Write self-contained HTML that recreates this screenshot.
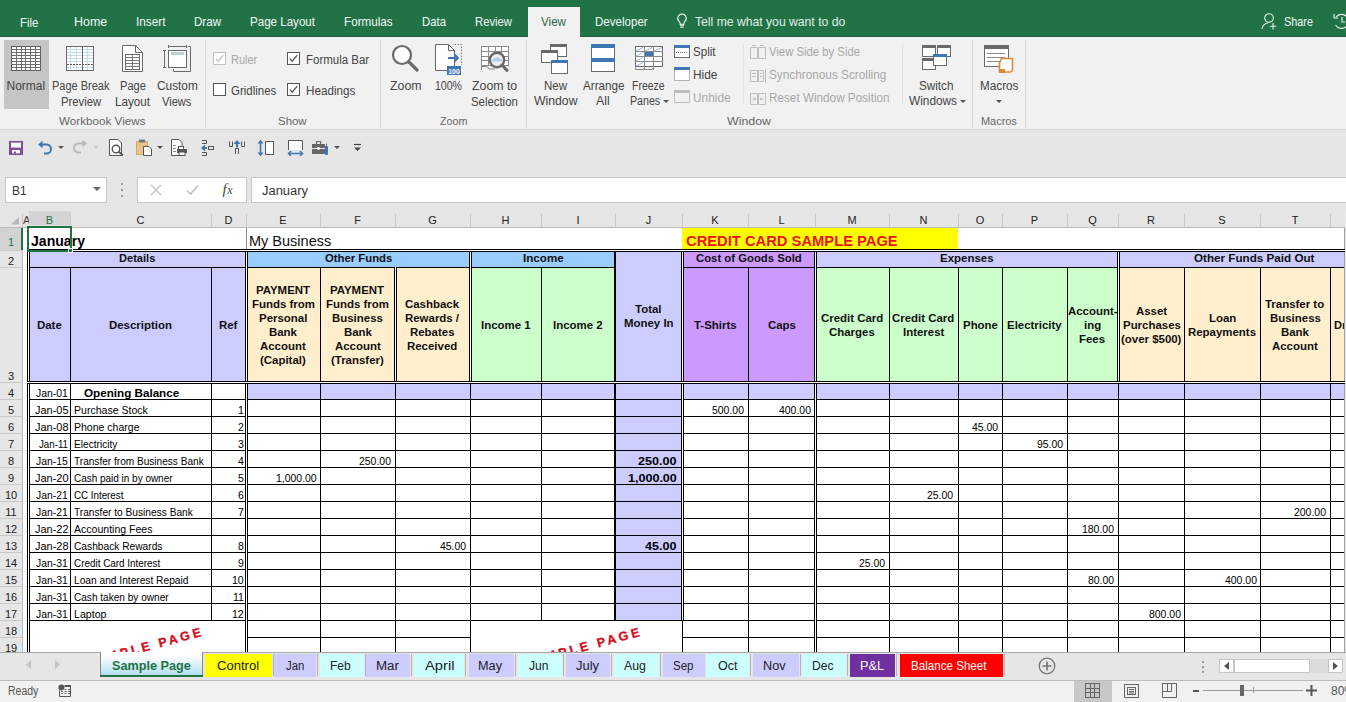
<!DOCTYPE html>
<html><head><meta charset="utf-8"><style>
html,body{margin:0;padding:0;width:1346px;height:702px;overflow:hidden;background:#fff;}
body{position:relative;font-family:"Liberation Sans",sans-serif;}
#r>div,#r div{position:absolute;}
.t{white-space:nowrap;}
</style></head><body><div id="r">
<div style="left:0px;top:0px;width:1346px;height:37px;background:#217346;"></div>
<div style="left:0px;top:36px;width:528px;height:1px;background:#235f40;"></div>
<div style="left:580px;top:36px;width:766px;height:1px;background:#235f40;"></div>
<div style="left:528px;top:7px;width:52px;height:30px;background:#f1f1f1;"></div>
<div class="t" style="left:20.20px;top:15px;font-size:13px;line-height:16px;color:#f3f8f5;transform:scaleX(0.8688);transform-origin:0 0;">File</div>
<div class="t" style="left:74.00px;top:14px;font-size:13px;line-height:16px;color:#f3f8f5;transform:scaleX(0.9602);transform-origin:0 0;">Home</div>
<div class="t" style="left:135.90px;top:14px;font-size:13px;line-height:16px;color:#f3f8f5;transform:scaleX(0.9073);transform-origin:0 0;">Insert</div>
<div class="t" style="left:194.00px;top:14px;font-size:13px;line-height:16px;color:#f3f8f5;transform:scaleX(0.8900);transform-origin:0 0;">Draw</div>
<div class="t" style="left:250.00px;top:14px;font-size:13px;line-height:16px;color:#f3f8f5;transform:scaleX(0.8903);transform-origin:0 0;">Page Layout</div>
<div class="t" style="left:343.90px;top:14px;font-size:13px;line-height:16px;color:#f3f8f5;transform:scaleX(0.8989);transform-origin:0 0;">Formulas</div>
<div class="t" style="left:422.00px;top:14px;font-size:13px;line-height:16px;color:#f3f8f5;transform:scaleX(0.8740);transform-origin:0 0;">Data</div>
<div class="t" style="left:475.00px;top:14px;font-size:13px;line-height:16px;color:#f3f8f5;transform:scaleX(0.8680);transform-origin:0 0;">Review</div>
<div class="t" style="left:595.00px;top:14px;font-size:13px;line-height:16px;color:#f3f8f5;transform:scaleX(0.8893);transform-origin:0 0;">Developer</div>
<div class="t" style="left:541.00px;top:14px;font-size:13px;line-height:16px;color:#2e6b4c;transform:scaleX(0.8946);transform-origin:0 0;">View</div>
<div class="t" style="left:694.60px;top:14px;font-size:13px;line-height:16px;color:#e2efe7;transform:scaleX(0.9363);transform-origin:0 0;">Tell me what you want to do</div>
<svg style="position:absolute;left:676px;top:13px;" width="12" height="16" viewBox="0 0 12 16"><path d="M6 1a4.3 4.3 0 0 0-2.7 7.6c.5.5.8 1 .8 1.7v0.9h3.8v-0.9c0-.7.3-1.2.8-1.7A4.3 4.3 0 0 0 6 1z" fill="none" stroke="#e8f2ec" stroke-width="1.1"/><path d="M4 12h4M4.3 14.2h3.4" stroke="#e8f2ec" stroke-width="1.3"/></svg>
<svg style="position:absolute;left:1261px;top:12px;" width="18" height="18" viewBox="0 0 18 18"><circle cx="8" cy="6" r="4.3" fill="none" stroke="#e8f2ec" stroke-width="1.1"/><path d="M1 17c.6-3.6 3-5.6 6-6" fill="none" stroke="#e8f2ec" stroke-width="1.1"/><path d="M12 11v6.5M8.8 14.2h6.5" stroke="#e8f2ec" stroke-width="1.1"/></svg>
<div class="t" style="left:1284.00px;top:14px;font-size:13px;line-height:16px;color:#f3f8f5;transform:scaleX(0.8359);transform-origin:0 0;">Share</div>
<svg style="position:absolute;left:1333px;top:11px;" width="13" height="20" viewBox="0 0 13 20"><path d="M3 6a7 7 0 1 1 -0.5 8" fill="none" stroke="#e8f2ec" stroke-width="1.1"/><path d="M1 3v4h4" fill="none" stroke="#e8f2ec" stroke-width="1.1"/><path d="M9 6v5h3" fill="none" stroke="#e8f2ec" stroke-width="1.1"/></svg>
<div style="left:0px;top:37px;width:1346px;height:93px;background:#f1f1f1;"></div>
<div style="left:0px;top:129px;width:1346px;height:1px;background:#d5d5d5;"></div>
<div style="left:205px;top:40px;width:1px;height:88px;background:#d8d8d8;"></div>
<div style="left:380px;top:40px;width:1px;height:88px;background:#d8d8d8;"></div>
<div style="left:526px;top:40px;width:1px;height:88px;background:#d8d8d8;"></div>
<div style="left:972px;top:40px;width:1px;height:88px;background:#d8d8d8;"></div>
<div style="left:1025px;top:40px;width:1px;height:88px;background:#d8d8d8;"></div>
<div style="left:743px;top:44px;width:1px;height:60px;background:#e2e2e2;"></div>
<div style="left:902px;top:44px;width:1px;height:60px;background:#e2e2e2;"></div>
<div style="left:4px;top:40px;width:45px;height:69px;background:#c5c5c5;"></div>
<svg style="position:absolute;left:11px;top:46px;" width="30" height="25" viewBox="0 0 30 25"><rect x="0.5" y="0.5" width="29" height="24" fill="#fff" stroke="#5e5e5e"/><path d="M5.5 0V25" stroke="#6e6e6e"/><path d="M10.5 0V25" stroke="#6e6e6e"/><path d="M14.5 0V25" stroke="#6e6e6e"/><path d="M19.5 0V25" stroke="#6e6e6e"/><path d="M24.5 0V25" stroke="#6e6e6e"/><path d="M0 3.5H30" stroke="#6e6e6e"/><path d="M0 6.5H30" stroke="#6e6e6e"/><path d="M0 9.5H30" stroke="#6e6e6e"/><path d="M0 12.5H30" stroke="#6e6e6e"/><path d="M0 15.5H30" stroke="#6e6e6e"/><path d="M0 18.5H30" stroke="#6e6e6e"/><path d="M0 21.5H30" stroke="#6e6e6e"/></svg>
<svg style="position:absolute;left:66px;top:46px;" width="28" height="25" viewBox="0 0 28 25"><rect x="0.5" y="0.5" width="27" height="24" fill="#fff" stroke="#6a6a6a"/><path d="M4.5 1V24" stroke="#c5daee"/><path d="M10.5 1V24" stroke="#c5daee"/><path d="M21.5 1V24" stroke="#c5daee"/><path d="M1 3.5H27" stroke="#c5daee"/><path d="M1 6.5H27" stroke="#c5daee"/><path d="M1 9.5H27" stroke="#c5daee"/><path d="M1 12.5H27" stroke="#c5daee"/><path d="M1 15.5H27" stroke="#c5daee"/><path d="M1 21.5H27" stroke="#c5daee"/><path d="M16.5 1V24" stroke="#6a6a6a"/><path d="M1 18.5H27" stroke="#5a5a5a" stroke-dasharray="2 1"/></svg>
<svg style="position:absolute;left:122px;top:45px;" width="22" height="28" viewBox="0 0 22 28"><path d="M0.5 0.5H13.5L20.5 7.5V26.5H0.5Z" fill="#fff" stroke="#6a6a6a"/><path d="M13.5 0.5V7.5H20.5" fill="none" stroke="#6a6a6a"/><rect x="3.5" y="9.5" width="14" height="15" fill="#fff" stroke="#6a6a6a"/><path d="M3.5 12.5H17.5" stroke="#7a7a7a"/><path d="M3.5 15.5H17.5" stroke="#7a7a7a"/><path d="M3.5 18.5H17.5" stroke="#7a7a7a"/><path d="M3.5 21.5H17.5" stroke="#7a7a7a"/><path d="M10.5 9.5V24.5" stroke="#7a7a7a"/></svg>
<svg style="position:absolute;left:163px;top:45px;" width="29" height="28" viewBox="0 0 29 28"><path d="M1.5 5.5V22.5M0 5.5H3M0 22.5H3" stroke="#6a6a6a" fill="none"/><path d="M5.5 1.5H23.5M5.5 0V3M23.5 0V3" stroke="#6a6a6a" fill="none"/><rect x="5.5" y="5.5" width="18" height="17" fill="#fff" stroke="#6a6a6a"/><rect x="8" y="7" width="13" height="3" fill="#c0cde0"/><path d="M25 1.5H27.5V26.5H10.5V24" fill="none" stroke="#6a6a6a"/></svg>
<div class="t" style="left:6.50px;top:79px;font-size:12px;line-height:15px;color:#444444;">Normal</div>
<div class="t" style="left:51.50px;top:79px;font-size:12px;line-height:15px;color:#444444;transform:scaleX(0.9153);transform-origin:0 0;">Page Break</div>
<div class="t" style="left:60.50px;top:95px;font-size:12px;line-height:15px;color:#444444;transform:scaleX(0.9395);transform-origin:0 0;">Preview</div>
<div class="t" style="left:120.40px;top:79px;font-size:12px;line-height:15px;color:#444444;transform:scaleX(0.9241);transform-origin:0 0;">Page</div>
<div class="t" style="left:115.40px;top:95px;font-size:12px;line-height:15px;color:#444444;transform:scaleX(0.9742);transform-origin:0 0;">Layout</div>
<div class="t" style="left:156.50px;top:79px;font-size:12px;line-height:15px;color:#444444;transform:scaleX(0.9868);transform-origin:0 0;">Custom</div>
<div class="t" style="left:162.20px;top:95px;font-size:12px;line-height:15px;color:#444444;transform:scaleX(0.9247);transform-origin:0 0;">Views</div>
<div class="t" style="left:58.50px;top:114px;font-size:11.5px;line-height:14px;color:#666666;transform:scaleX(1.0150);transform-origin:0 0;">Workbook Views</div>
<svg style="position:absolute;left:213px;top:52px;" width="13" height="13" viewBox="0 0 13 13"><rect x="0.5" y="0.5" width="12" height="12" fill="#fff" stroke="#c0c0c0"/><path d="M2.8 6.6L5.2 9.2L10.2 3.2" fill="none" stroke="#c0c0c0" stroke-width="1.3"/></svg>
<svg style="position:absolute;left:213px;top:83px;" width="13" height="13" viewBox="0 0 13 13"><rect x="0.5" y="0.5" width="12" height="12" fill="#fff" stroke="#555"/></svg>
<svg style="position:absolute;left:287px;top:52px;" width="13" height="13" viewBox="0 0 13 13"><rect x="0.5" y="0.5" width="12" height="12" fill="#fff" stroke="#555"/><path d="M2.8 6.6L5.2 9.2L10.2 3.2" fill="none" stroke="#555" stroke-width="1.3"/></svg>
<svg style="position:absolute;left:287px;top:83px;" width="13" height="13" viewBox="0 0 13 13"><rect x="0.5" y="0.5" width="12" height="12" fill="#fff" stroke="#555"/><path d="M2.8 6.6L5.2 9.2L10.2 3.2" fill="none" stroke="#555" stroke-width="1.3"/></svg>
<div class="t" style="left:231.40px;top:53px;font-size:12px;line-height:15px;color:#a8a8a8;transform:scaleX(0.9136);transform-origin:0 0;">Ruler</div>
<div class="t" style="left:231.40px;top:84px;font-size:12px;line-height:15px;color:#444444;transform:scaleX(0.9567);transform-origin:0 0;">Gridlines</div>
<div class="t" style="left:305.60px;top:53px;font-size:12px;line-height:15px;color:#444444;transform:scaleX(0.9573);transform-origin:0 0;">Formula Bar</div>
<div class="t" style="left:305.60px;top:84px;font-size:12px;line-height:15px;color:#444444;transform:scaleX(0.9743);transform-origin:0 0;">Headings</div>
<div class="t" style="left:278.40px;top:114px;font-size:11.5px;line-height:14px;color:#666666;transform:scaleX(0.9942);transform-origin:0 0;">Show</div>
<svg style="position:absolute;left:390px;top:43px;" width="30" height="30" viewBox="0 0 30 30"><circle cx="12" cy="12" r="9" fill="#fff" stroke="#6a6a6a" stroke-width="2.2"/><path d="M19 19L27 27" stroke="#6a6a6a" stroke-width="3.2" stroke-linecap="round"/></svg>
<svg style="position:absolute;left:435px;top:44px;" width="28" height="32" viewBox="0 0 28 32"><path d="M0.5 0.5H13.5L19.5 6.5V26.5H0.5Z" fill="#fff" stroke="#6a6a6a"/><path d="M13.5 0.5V6.5H19.5" fill="none" stroke="#6a6a6a"/><path d="M19.5 0.5H26.5V21" fill="none" stroke="#7a7a7a" stroke-dasharray="1.5 1.5"/><path d="M13 14H23M19.5 10.5L23 14L19.5 17.5" fill="none" stroke="#3f76b3" stroke-width="2"/><rect x="12" y="22" width="14" height="9" fill="#3f76b3"/><text x="19" y="29.5" font-size="7" font-family="Liberation Sans" font-weight="bold" fill="#fff" text-anchor="middle">100</text></svg>
<svg style="position:absolute;left:481px;top:46px;" width="28" height="26" viewBox="0 0 28 26"><g><rect x="0.5" y="0.5" width="27" height="19" fill="#fff" stroke="#8a8a8a"/><path d="M7.5 0V20" stroke="#8a8a8a"/><path d="M14.5 0V20" stroke="#8a8a8a"/><path d="M20.5 0V20" stroke="#8a8a8a"/><path d="M0 5.5H28" stroke="#8a8a8a"/><path d="M0 10.5H28" stroke="#8a8a8a"/><path d="M0 14.5H28" stroke="#8a8a8a"/></g><path d="M0 20.5H6L8 23H14" fill="none" stroke="#8a8a8a"/><path d="M0.5 0V24" stroke="#8a8a8a"/><circle cx="16" cy="14" r="7.2" fill="#f1f1f1" stroke="#6a6a6a" stroke-width="2.4"/><path d="M10.5 15.5a5.5 4 0 0 1 11 0Z" fill="#b9cde3"/><path d="M21 19L26 24.5" stroke="#6a6a6a" stroke-width="3" stroke-linecap="round"/></svg>
<div class="t" style="left:390.00px;top:79px;font-size:12px;line-height:15px;color:#444444;transform:scaleX(1.0269);transform-origin:0 0;">Zoom</div>
<div class="t" style="left:434.90px;top:79px;font-size:12px;line-height:15px;color:#444444;transform:scaleX(0.8797);transform-origin:0 0;">100%</div>
<div class="t" style="left:472.00px;top:79px;font-size:12px;line-height:15px;color:#444444;transform:scaleX(1.0269);transform-origin:0 0;">Zoom to</div>
<div class="t" style="left:471.40px;top:95px;font-size:12px;line-height:15px;color:#444444;transform:scaleX(0.9480);transform-origin:0 0;">Selection</div>
<div class="t" style="left:439.60px;top:114px;font-size:11.5px;line-height:14px;color:#666666;transform:scaleX(0.9321);transform-origin:0 0;">Zoom</div>
<svg style="position:absolute;left:541px;top:44px;" width="28" height="31" viewBox="0 0 28 31"><rect x="9.5" y="0.5" width="16" height="12" fill="#fff" stroke="#6a6a6a"/><rect x="9" y="0" width="17" height="3" fill="#6a6a6a"/><rect x="0.5" y="6.5" width="16" height="12" fill="#fff" stroke="#6a6a6a"/><rect x="0" y="6" width="17" height="3" fill="#6a6a6a"/><rect x="10.5" y="16.5" width="16" height="13" fill="#fff" stroke="#6a6a6a"/><rect x="10" y="16" width="17" height="3" fill="#3f76b3"/></svg>
<svg style="position:absolute;left:591px;top:44px;" width="24" height="28" viewBox="0 0 24 28"><rect x="0.5" y="0.5" width="23" height="27" fill="#fff" stroke="#6a6a6a"/><rect x="0" y="0" width="24" height="4" fill="#3f76b3"/><rect x="0" y="14" width="24" height="4" fill="#3f76b3"/></svg>
<svg style="position:absolute;left:635px;top:46px;" width="28" height="25" viewBox="0 0 28 25"><rect x="0.5" y="0.5" width="27" height="20" fill="#fff" stroke="#6a6a6a"/><path d="M9.5 0V24" stroke="#8a8a8a"/><path d="M18.5 0V24" stroke="#8a8a8a"/><path d="M0 5.5H28" stroke="#8a8a8a"/><path d="M0 10.5H28" stroke="#8a8a8a"/><path d="M0 15.5H28" stroke="#8a8a8a"/><rect x="10" y="6" width="8" height="4" fill="#3f76b3"/><path d="M1 5L8 1.5M1 10L8 6.5M1 15L8 11.5M1 20L8 16.5M10 5L17 1.5M19 5L27 1.5" stroke="#9ab6d6"/><path d="M0.5 20.5V23.5H8.5L9.5 21.5M9.5 23.5H17.5L18.5 21.5" fill="none" stroke="#8a8a8a"/></svg>
<svg style="position:absolute;left:674px;top:45px;" width="16" height="13" viewBox="0 0 16 13"><rect x="0.5" y="0.5" width="15" height="12" fill="#fff" stroke="#6a6a6a"/><rect x="0" y="0" width="16" height="3" fill="#3f76b3"/><path d="M2 7.5H14" stroke="#6a6a6a" stroke-dasharray="1 1"/></svg>
<svg style="position:absolute;left:674px;top:67px;" width="16" height="14" viewBox="0 0 16 14"><rect x="0.5" y="0.5" width="15" height="13" fill="#fff" stroke="#6a6a6a" stroke-dasharray="1 1"/><rect x="0" y="0" width="16" height="3" fill="#3f76b3"/></svg>
<svg style="position:absolute;left:674px;top:90px;" width="16" height="13" viewBox="0 0 16 13"><rect x="0.5" y="0.5" width="15" height="12" fill="#f1f1f1" stroke="#bdbdbd"/><rect x="0" y="0" width="16" height="3" fill="#bdbdbd"/></svg>
<div class="t" style="left:693.30px;top:45px;font-size:12px;line-height:15px;color:#444444;transform:scaleX(0.9638);transform-origin:0 0;">Split</div>
<div class="t" style="left:693.30px;top:68px;font-size:12px;line-height:15px;color:#444444;transform:scaleX(0.9927);transform-origin:0 0;">Hide</div>
<div class="t" style="left:693.30px;top:91px;font-size:12px;line-height:15px;color:#a8a8a8;transform:scaleX(0.9887);transform-origin:0 0;">Unhide</div>
<div class="t" style="left:543.80px;top:79px;font-size:12px;line-height:15px;color:#444444;transform:scaleX(0.9581);transform-origin:0 0;">New</div>
<div class="t" style="left:533.50px;top:94px;font-size:12px;line-height:15px;color:#444444;transform:scaleX(1.0192);transform-origin:0 0;">Window</div>
<div class="t" style="left:582.50px;top:79px;font-size:12px;line-height:15px;color:#444444;transform:scaleX(0.9697);transform-origin:0 0;">Arrange</div>
<div class="t" style="left:596.00px;top:94px;font-size:12px;line-height:15px;color:#444444;transform:scaleX(1.0197);transform-origin:0 0;">All</div>
<div class="t" style="left:632.40px;top:79px;font-size:12px;line-height:15px;color:#444444;transform:scaleX(0.8728);transform-origin:0 0;">Freeze</div>
<div class="t" style="left:629.60px;top:94px;font-size:12px;line-height:15px;color:#444444;transform:scaleX(0.8875);transform-origin:0 0;">Panes</div>
<svg style="position:absolute;left:662.5px;top:99.5px;" width="6" height="4" viewBox="0 0 6 4"><path d="M0 0H6L3 3Z" fill="#555"/></svg>
<svg style="position:absolute;left:750px;top:45px;" width="16" height="14" viewBox="0 0 16 14"><path d="M0.5 2.5H7.5V13.5H0.5Z M8.5 2.5H15.5V13.5H8.5Z" fill="none" stroke="#bdbdbd"/><path d="M2 0.5H6M10 0.5H14" stroke="#bdbdbd"/></svg>
<svg style="position:absolute;left:750px;top:68px;" width="16" height="15" viewBox="0 0 16 15"><path d="M0.5 2.5H7.5V13.5H0.5Z M8.5 2.5H13.5V13.5H8.5Z" fill="none" stroke="#bdbdbd"/><path d="M2 5.5H6M2 8.5H6M10 5.5H12M10 8.5H12M15.5 1V15" stroke="#bdbdbd"/></svg>
<svg style="position:absolute;left:750px;top:91px;" width="16" height="14" viewBox="0 0 16 14"><path d="M0.5 2.5H7.5V13.5H0.5Z M8.5 2.5H15.5V13.5H8.5Z" fill="none" stroke="#bdbdbd"/><path d="M2 8H6M4.5 6.5L6 8L4.5 9.5M14 8H10M11.5 6.5L10 8L11.5 9.5" fill="none" stroke="#bdbdbd"/></svg>
<div class="t" style="left:769.00px;top:45px;font-size:12px;line-height:15px;color:#a8a8a8;transform:scaleX(0.9429);transform-origin:0 0;">View Side by Side</div>
<div class="t" style="left:769.00px;top:68px;font-size:12px;line-height:15px;color:#a8a8a8;transform:scaleX(0.9824);transform-origin:0 0;">Synchronous Scrolling</div>
<div class="t" style="left:769.00px;top:91px;font-size:12px;line-height:15px;color:#a8a8a8;transform:scaleX(0.9774);transform-origin:0 0;">Reset Window Position</div>
<svg style="position:absolute;left:922px;top:45px;" width="29" height="25" viewBox="0 0 29 25"><rect x="0.5" y="0.5" width="13" height="11" fill="#fff" stroke="#6a6a6a"/><rect x="0" y="0" width="14" height="3" fill="#6a6a6a"/><rect x="15.5" y="0.5" width="13" height="11" fill="#fff" stroke="#6a6a6a"/><rect x="15" y="0" width="14" height="3" fill="#6a6a6a"/><rect x="0.5" y="13.5" width="13" height="11" fill="#fff" stroke="#6a6a6a"/><rect x="0" y="13" width="14" height="3" fill="#6a6a6a"/><rect x="11.5" y="9.5" width="13" height="11" fill="#fff" stroke="#6a6a6a"/><rect x="11" y="9" width="14" height="3" fill="#3f76b3"/></svg>
<div class="t" style="left:919.20px;top:79px;font-size:12px;line-height:15px;color:#444444;transform:scaleX(0.9733);transform-origin:0 0;">Switch</div>
<div class="t" style="left:908.90px;top:94px;font-size:12px;line-height:15px;color:#444444;transform:scaleX(0.9860);transform-origin:0 0;">Windows</div>
<svg style="position:absolute;left:960px;top:99.5px;" width="6" height="4" viewBox="0 0 6 4"><path d="M0 0H6L3 3Z" fill="#555"/></svg>
<div class="t" style="left:727.00px;top:114px;font-size:11.5px;line-height:14px;color:#666666;transform:scaleX(1.0757);transform-origin:0 0;">Window</div>
<svg style="position:absolute;left:984px;top:45px;" width="31" height="29" viewBox="0 0 31 29"><rect x="0.5" y="0.5" width="24" height="21" fill="#fff" stroke="#6a6a6a"/><rect x="0" y="0" width="25" height="4" fill="#6a6a6a"/><path d="M3 8.5H21" stroke="#8a8a8a"/><path d="M3 12.5H21" stroke="#8a8a8a"/><path d="M3 16.5H21" stroke="#8a8a8a"/><path d="M17.5 13.5H28.5V24.5a2.5 2.5 0 0 1 -2.5 2.5H15.5V18Z" fill="#fff" stroke="#e0883a" stroke-width="1.6"/><path d="M15 24H21V28H15Z" fill="#e0883a"/></svg>
<div class="t" style="left:979.50px;top:79px;font-size:12px;line-height:15px;color:#444444;transform:scaleX(0.9761);transform-origin:0 0;">Macros</div>
<svg style="position:absolute;left:996px;top:99.5px;" width="6" height="4" viewBox="0 0 6 4"><path d="M0 0H6L3 3Z" fill="#555"/></svg>
<div class="t" style="left:980.60px;top:114px;font-size:11.5px;line-height:14px;color:#666666;transform:scaleX(0.9496);transform-origin:0 0;">Macros</div>
<div style="left:0px;top:130px;width:1346px;height:98px;background:#e6e6e6;"></div>
<svg style="position:absolute;left:9px;top:141px;" width="14" height="14" viewBox="0 0 14 14"><rect x="0" y="0" width="14" height="14" fill="#7e4b9e"/><rect x="2" y="1.6" width="10" height="5" fill="#fff"/><rect x="3" y="9" width="8" height="3.4" fill="#fff"/><rect x="5" y="10.5" width="2" height="2" fill="#7e4b9e"/></svg>
<svg style="position:absolute;left:37px;top:140px;" width="16" height="16" viewBox="0 0 16 16"><path d="M4 4.5H9.5a4.5 4.5 0 0 1 0 9H7" fill="none" stroke="#3f76b3" stroke-width="2"/><path d="M1 4.5L5.5 0.8V8.2Z" fill="#3f76b3"/></svg>
<svg style="position:absolute;left:57.5px;top:145.5px;" width="6" height="4" viewBox="0 0 6 4"><path d="M0 0H6L3 3Z" fill="#555"/></svg>
<svg style="position:absolute;left:72px;top:139px;" width="16" height="16" viewBox="0 0 16 16"><path d="M12 4.5H6.5a4.5 4.5 0 0 0 0 9H9" fill="none" stroke="#b8b8b8" stroke-width="2"/><path d="M15 4.5L10.5 0.8V8.2Z" fill="#b8b8b8"/></svg>
<svg style="position:absolute;left:92.5px;top:145.5px;" width="6" height="4" viewBox="0 0 6 4"><path d="M0 0H6L3 3Z" fill="#c4c4c4"/></svg>
<svg style="position:absolute;left:109px;top:139px;" width="15" height="17" viewBox="0 0 15 17"><path d="M0.5 0.5H9L12.5 4V16.5H0.5Z" fill="#fff" stroke="#555"/><circle cx="7" cy="10" r="3.8" fill="#fff" stroke="#555" stroke-width="1.4"/><path d="M9.8 12.8L14 16.5" stroke="#555" stroke-width="1.8"/></svg>
<svg style="position:absolute;left:136px;top:139px;" width="17" height="17" viewBox="0 0 17 17"><rect x="0.5" y="2.5" width="11" height="13" fill="#e9c48a" stroke="#d9a85c"/><rect x="3" y="0.5" width="6" height="3" fill="#777"/><path d="M7.5 7.5H13L15.5 10V16.5H7.5Z" fill="#fff" stroke="#555"/></svg>
<svg style="position:absolute;left:156.5px;top:145.5px;" width="6" height="4" viewBox="0 0 6 4"><path d="M0 0H6L3 3Z" fill="#555"/></svg>
<svg style="position:absolute;left:171px;top:139px;" width="17" height="17" viewBox="0 0 17 17"><path d="M0.5 0.5H8L11 3.5V16.5H0.5Z" fill="#fff" stroke="#555"/><path d="M2 6.5H5M2 9.5H5M2 12.5H5" stroke="#888"/><rect x="7.5" y="7.5" width="5" height="3" fill="#fff" stroke="#555"/><rect x="6" y="10" width="10" height="4" fill="#555"/><rect x="8" y="13" width="6" height="3.5" fill="#fff" stroke="#555"/></svg>
<svg style="position:absolute;left:200px;top:139px;" width="15" height="18" viewBox="0 0 15 18"><path d="M2 1.5H6.5V4.5H2M2 13.5H6.5V16.5H2" fill="none" stroke="#555"/><rect x="8.5" y="7.5" width="5" height="3" fill="none" stroke="#555"/><path d="M7 9H3.5" stroke="#3f76b3" stroke-width="2"/><path d="M1 9L5 5.5V12.5Z" fill="#3f76b3"/></svg>
<svg style="position:absolute;left:228px;top:139px;" width="19" height="17" viewBox="0 0 19 17"><path d="M1.5 2.5V7.5H4.5V2.5M13.5 2.5V7.5H16.5V2.5M7.5 15V9.5H10.5V15" fill="none" stroke="#555"/><path d="M9 8.5V4" stroke="#3f76b3" stroke-width="2"/><path d="M9 1L12.5 5H5.5Z" fill="#3f76b3"/></svg>
<svg style="position:absolute;left:257px;top:139px;" width="18" height="18" viewBox="0 0 18 18"><path d="M3.5 3V15" stroke="#3f76b3" stroke-width="1.6"/><path d="M3.5 0.8L6.5 4.5H0.5ZM3.5 17.2L6.5 13.5H0.5Z" fill="#3f76b3"/><rect x="8.5" y="2.5" width="8" height="13" fill="#fff" stroke="#555"/></svg>
<svg style="position:absolute;left:287px;top:140px;" width="17" height="16" viewBox="0 0 17 16"><path d="M1.5 10V0.5H15.5V10" fill="#fff" stroke="#555"/><path d="M1.5 13.5H15.5M4 11L1.5 13.5L4 16M13 11L15.5 13.5L13 16" fill="none" stroke="#3f76b3" stroke-width="1.5"/></svg>
<svg style="position:absolute;left:312px;top:139px;" width="17" height="17" viewBox="0 0 17 17"><rect x="0" y="5" width="13" height="10" fill="#666"/><path d="M4.5 5V2.5H8.5V5" fill="none" stroke="#666" stroke-width="1.2"/><path d="M0 9.5H13" stroke="#e6e6e6"/><circle cx="6.5" cy="9.5" r="1.4" fill="#fff"/><path d="M14.5 4.5V7" stroke="#3f76b3" stroke-width="1"/><rect x="13" y="7" width="3" height="9" rx="1" fill="#3f76b3"/></svg>
<svg style="position:absolute;left:333.5px;top:145.5px;" width="6" height="4" viewBox="0 0 6 4"><path d="M0 0H6L3 3Z" fill="#555"/></svg>
<svg style="position:absolute;left:354px;top:143px;" width="7" height="9" viewBox="0 0 7 9"><path d="M0 1.5H7" stroke="#444" stroke-width="1.2"/><path d="M0 4.5H7L3.5 8Z" fill="#444"/></svg>
<div style="left:5px;top:177px;width:102px;height:26px;background:#fff;box-sizing:border-box;border:1px solid #c6c6c6;"></div>
<div class="t" style="left:12.30px;top:184px;font-size:12px;line-height:15px;color:#333;transform:scaleX(0.9878);transform-origin:0 0;">B1</div>
<svg style="position:absolute;left:93px;top:187px;" width="8" height="4" viewBox="0 0 8 4"><path d="M0 0H8L4 4Z" fill="#666"/></svg>
<div style="left:121px;top:183px;width:2px;height:2px;background:#9a9a9a;"></div>
<div style="left:121px;top:189px;width:2px;height:2px;background:#9a9a9a;"></div>
<div style="left:121px;top:195px;width:2px;height:2px;background:#9a9a9a;"></div>
<div style="left:137px;top:177px;width:110px;height:26px;background:#fff;box-sizing:border-box;border:1px solid #c6c6c6;"></div>
<svg style="position:absolute;left:150px;top:184px;" width="12" height="12" viewBox="0 0 12 12"><path d="M1 1L11 11M11 1L1 11" stroke="#c2c2c2" stroke-width="1.3"/></svg>
<svg style="position:absolute;left:186px;top:184px;" width="13" height="12" viewBox="0 0 13 12"><path d="M1 6.5L4.5 10L12 1.5" fill="none" stroke="#c2c2c2" stroke-width="1.6"/></svg>
<div class="t" style="left:222.5px;top:180px;font-family:'Liberation Serif',serif;font-style:italic;font-size:15px;line-height:18px;color:#444">f<span style="font-size:12px;margin-left:0.5px">x</span></div>
<div style="left:251px;top:177px;width:1100px;height:26px;background:#fff;box-sizing:border-box;border:1px solid #c6c6c6;"></div>
<div class="t" style="left:261.90px;top:183px;font-size:12.5px;line-height:16px;color:#333;transform:scaleX(1.0344);transform-origin:0 0;">January</div>
<div style="left:0px;top:212px;width:1346px;height:16px;background:#e6e6e6;"></div>
<div style="left:0px;top:227px;width:1346px;height:1px;background:#bdbdbd;"></div>
<div style="left:29px;top:211px;width:42px;height:14px;background:#d4d4d4;"></div>
<div style="left:22px;top:212px;width:7px;height:15px;overflow:hidden"><div class="t" style="left:1px;top:0px;font-size:11px;line-height:16px;color:#444">A</div></div>
<div style="left:70px;top:214px;width:1px;height:13px;background:#c9c9c9;"></div>
<div class="t" style="left:45.83px;top:213px;font-size:11px;line-height:14px;color:#217346;">B</div>
<div style="left:211px;top:214px;width:1px;height:13px;background:#c9c9c9;"></div>
<div class="t" style="left:136.53px;top:213px;font-size:11px;line-height:14px;color:#222;">C</div>
<div style="left:246px;top:214px;width:1px;height:13px;background:#c9c9c9;"></div>
<div class="t" style="left:224.53px;top:213px;font-size:11px;line-height:14px;color:#222;">D</div>
<div style="left:320px;top:214px;width:1px;height:13px;background:#c9c9c9;"></div>
<div class="t" style="left:279.33px;top:213px;font-size:11px;line-height:14px;color:#222;">E</div>
<div style="left:395px;top:214px;width:1px;height:13px;background:#c9c9c9;"></div>
<div class="t" style="left:354.14px;top:213px;font-size:11px;line-height:14px;color:#222;">F</div>
<div style="left:470px;top:214px;width:1px;height:13px;background:#c9c9c9;"></div>
<div class="t" style="left:428.22px;top:213px;font-size:11px;line-height:14px;color:#222;">G</div>
<div style="left:541px;top:214px;width:1px;height:13px;background:#c9c9c9;"></div>
<div class="t" style="left:501.53px;top:213px;font-size:11px;line-height:14px;color:#222;">H</div>
<div style="left:615px;top:214px;width:1px;height:13px;background:#c9c9c9;"></div>
<div class="t" style="left:576.47px;top:213px;font-size:11px;line-height:14px;color:#222;">I</div>
<div style="left:682px;top:214px;width:1px;height:13px;background:#c9c9c9;"></div>
<div class="t" style="left:645.75px;top:213px;font-size:11px;line-height:14px;color:#222;">J</div>
<div style="left:748px;top:214px;width:1px;height:13px;background:#c9c9c9;"></div>
<div class="t" style="left:711.33px;top:213px;font-size:11px;line-height:14px;color:#222;">K</div>
<div style="left:815px;top:214px;width:1px;height:13px;background:#c9c9c9;"></div>
<div class="t" style="left:778.44px;top:213px;font-size:11px;line-height:14px;color:#222;">L</div>
<div style="left:889px;top:214px;width:1px;height:13px;background:#c9c9c9;"></div>
<div class="t" style="left:847.42px;top:213px;font-size:11px;line-height:14px;color:#222;">M</div>
<div style="left:958px;top:214px;width:1px;height:13px;background:#c9c9c9;"></div>
<div class="t" style="left:919.53px;top:213px;font-size:11px;line-height:14px;color:#222;">N</div>
<div style="left:1002px;top:214px;width:1px;height:13px;background:#c9c9c9;"></div>
<div class="t" style="left:975.72px;top:213px;font-size:11px;line-height:14px;color:#222;">O</div>
<div style="left:1067px;top:214px;width:1px;height:13px;background:#c9c9c9;"></div>
<div class="t" style="left:1030.83px;top:213px;font-size:11px;line-height:14px;color:#222;">P</div>
<div style="left:1118px;top:214px;width:1px;height:13px;background:#c9c9c9;"></div>
<div class="t" style="left:1088.22px;top:213px;font-size:11px;line-height:14px;color:#222;">Q</div>
<div style="left:1184px;top:214px;width:1px;height:13px;background:#c9c9c9;"></div>
<div class="t" style="left:1147.03px;top:213px;font-size:11px;line-height:14px;color:#222;">R</div>
<div style="left:1260px;top:214px;width:1px;height:13px;background:#c9c9c9;"></div>
<div class="t" style="left:1218.33px;top:213px;font-size:11px;line-height:14px;color:#222;">S</div>
<div style="left:1330px;top:214px;width:1px;height:13px;background:#c9c9c9;"></div>
<div class="t" style="left:1291.64px;top:213px;font-size:11px;line-height:14px;color:#222;">T</div>
<div style="left:1400px;top:214px;width:1px;height:13px;background:#c9c9c9;"></div>
<div style="left:22px;top:214px;width:1px;height:13px;background:#c9c9c9;"></div>
<svg style="position:absolute;left:11px;top:217px;" width="9" height="8" viewBox="0 0 9 8"><path d="M8 0V7.5H0Z" fill="#b8b8b8"/></svg>
<div style="left:0px;top:228px;width:22px;height:424px;background:#e6e6e6;"></div>
<div style="left:22px;top:228px;width:1px;height:424px;background:#bdbdbd;"></div>
<div style="left:0px;top:228px;width:21px;height:22px;background:#d2d2d2;"></div>
<div style="left:21px;top:228px;width:2px;height:22px;background:#217346;"></div>
<div style="left:0px;top:250px;width:22px;height:1px;background:#c9c9c9;"></div>
<div class="t" style="left:7.94px;top:235px;font-size:11px;line-height:14px;color:#217346;">1</div>
<div style="left:0px;top:267px;width:22px;height:1px;background:#c9c9c9;"></div>
<div class="t" style="left:7.94px;top:254px;font-size:11px;line-height:14px;color:#222;">2</div>
<div style="left:0px;top:382px;width:22px;height:1px;background:#c9c9c9;"></div>
<div class="t" style="left:7.94px;top:369px;font-size:11px;line-height:14px;color:#222;">3</div>
<div style="left:0px;top:399px;width:22px;height:1px;background:#c9c9c9;"></div>
<div class="t" style="left:7.94px;top:386px;font-size:11px;line-height:14px;color:#222;">4</div>
<div style="left:0px;top:416px;width:22px;height:1px;background:#c9c9c9;"></div>
<div class="t" style="left:7.94px;top:403px;font-size:11px;line-height:14px;color:#222;">5</div>
<div style="left:0px;top:433px;width:22px;height:1px;background:#c9c9c9;"></div>
<div class="t" style="left:7.94px;top:420px;font-size:11px;line-height:14px;color:#222;">6</div>
<div style="left:0px;top:450px;width:22px;height:1px;background:#c9c9c9;"></div>
<div class="t" style="left:7.94px;top:437px;font-size:11px;line-height:14px;color:#222;">7</div>
<div style="left:0px;top:467px;width:22px;height:1px;background:#c9c9c9;"></div>
<div class="t" style="left:7.94px;top:454px;font-size:11px;line-height:14px;color:#222;">8</div>
<div style="left:0px;top:484px;width:22px;height:1px;background:#c9c9c9;"></div>
<div class="t" style="left:7.94px;top:471px;font-size:11px;line-height:14px;color:#222;">9</div>
<div style="left:0px;top:501px;width:22px;height:1px;background:#c9c9c9;"></div>
<div class="t" style="left:4.88px;top:488px;font-size:11px;line-height:14px;color:#222;">10</div>
<div style="left:0px;top:518px;width:22px;height:1px;background:#c9c9c9;"></div>
<div class="t" style="left:5.29px;top:505px;font-size:11px;line-height:14px;color:#222;">11</div>
<div style="left:0px;top:535px;width:22px;height:1px;background:#c9c9c9;"></div>
<div class="t" style="left:4.88px;top:522px;font-size:11px;line-height:14px;color:#222;">12</div>
<div style="left:0px;top:552px;width:22px;height:1px;background:#c9c9c9;"></div>
<div class="t" style="left:4.88px;top:539px;font-size:11px;line-height:14px;color:#222;">13</div>
<div style="left:0px;top:569px;width:22px;height:1px;background:#c9c9c9;"></div>
<div class="t" style="left:4.88px;top:556px;font-size:11px;line-height:14px;color:#222;">14</div>
<div style="left:0px;top:586px;width:22px;height:1px;background:#c9c9c9;"></div>
<div class="t" style="left:4.88px;top:573px;font-size:11px;line-height:14px;color:#222;">15</div>
<div style="left:0px;top:603px;width:22px;height:1px;background:#c9c9c9;"></div>
<div class="t" style="left:4.88px;top:590px;font-size:11px;line-height:14px;color:#222;">16</div>
<div style="left:0px;top:620px;width:22px;height:1px;background:#c9c9c9;"></div>
<div class="t" style="left:4.88px;top:607px;font-size:11px;line-height:14px;color:#222;">17</div>
<div style="left:0px;top:637px;width:22px;height:1px;background:#c9c9c9;"></div>
<div class="t" style="left:4.88px;top:624px;font-size:11px;line-height:14px;color:#222;">18</div>
<div style="left:0px;top:654px;width:22px;height:1px;background:#c9c9c9;"></div>
<div class="t" style="left:4.88px;top:641px;font-size:11px;line-height:14px;color:#222;">19</div>
<div class="t" style="left:4.88px;top:658px;font-size:11px;line-height:14px;color:#222;">20</div>
<div style="left:23px;top:228px;width:1321px;height:424px;background:#fff;"></div>
<div style="left:1345px;top:212px;width:1px;height:440px;background:#e8e8e8;"></div>
<div style="left:30px;top:252px;width:215px;height:15px;background:#ccccff;"></div>
<div style="left:248px;top:252px;width:221px;height:15px;background:#99ccff;"></div>
<div style="left:472px;top:252px;width:142px;height:15px;background:#99ccff;"></div>
<div style="left:616px;top:252px;width:65px;height:129px;background:#ccccff;"></div>
<div style="left:684px;top:252px;width:130px;height:15px;background:#cc99ff;"></div>
<div style="left:817px;top:252px;width:300px;height:15px;background:#ccccff;"></div>
<div style="left:1120px;top:252px;width:224px;height:15px;background:#ccccff;"></div>
<div style="left:30px;top:268px;width:215px;height:113px;background:#ccccff;"></div>
<div style="left:248px;top:268px;width:221px;height:113px;background:#ffefcc;"></div>
<div style="left:472px;top:268px;width:142px;height:113px;background:#ccffcc;"></div>
<div style="left:684px;top:268px;width:130px;height:113px;background:#cc99ff;"></div>
<div style="left:817px;top:268px;width:300px;height:113px;background:#ccffcc;"></div>
<div style="left:1120px;top:268px;width:224px;height:113px;background:#ffefcc;"></div>
<div style="left:248px;top:384px;width:1096px;height:15px;background:#ccccff;"></div>
<div style="left:616px;top:399px;width:65px;height:221px;background:#ccccff;"></div>
<div style="left:246px;top:228px;width:1px;height:21px;background:#8c8c8c;"></div>
<div style="left:682px;top:228px;width:276px;height:21px;background:#ffff00;"></div>
<div style="left:28px;top:267px;width:587px;height:1px;background:#000;"></div>
<div style="left:682px;top:267px;width:662px;height:1px;background:#000;"></div>
<div style="left:28px;top:399px;width:1316px;height:1px;background:#000;"></div>
<div style="left:28px;top:416px;width:1316px;height:1px;background:#000;"></div>
<div style="left:28px;top:433px;width:1316px;height:1px;background:#000;"></div>
<div style="left:28px;top:450px;width:1316px;height:1px;background:#000;"></div>
<div style="left:28px;top:467px;width:1316px;height:1px;background:#000;"></div>
<div style="left:28px;top:484px;width:1316px;height:1px;background:#000;"></div>
<div style="left:28px;top:501px;width:1316px;height:1px;background:#000;"></div>
<div style="left:28px;top:518px;width:1316px;height:1px;background:#000;"></div>
<div style="left:28px;top:535px;width:1316px;height:1px;background:#000;"></div>
<div style="left:28px;top:552px;width:1316px;height:1px;background:#000;"></div>
<div style="left:28px;top:569px;width:1316px;height:1px;background:#000;"></div>
<div style="left:28px;top:586px;width:1316px;height:1px;background:#000;"></div>
<div style="left:28px;top:603px;width:1316px;height:1px;background:#000;"></div>
<div style="left:28px;top:620px;width:1316px;height:1px;background:#000;"></div>
<div style="left:246px;top:637px;width:224px;height:1px;background:#000;"></div>
<div style="left:682px;top:637px;width:662px;height:1px;background:#000;"></div>
<div style="left:70px;top:267px;width:1px;height:353px;background:#000;"></div>
<div style="left:211px;top:267px;width:1px;height:353px;background:#000;"></div>
<div style="left:320px;top:267px;width:1px;height:385px;background:#000;"></div>
<div style="left:394px;top:267px;width:1px;height:115px;background:#000;"></div>
<div style="left:395px;top:267px;width:1px;height:115px;background:#fff;"></div>
<div style="left:396px;top:267px;width:1px;height:115px;background:#000;"></div>
<div style="left:395px;top:383px;width:1px;height:269px;background:#000;"></div>
<div style="left:469px;top:249px;width:1px;height:133px;background:#000;"></div>
<div style="left:470px;top:249px;width:1px;height:133px;background:#fff;"></div>
<div style="left:471px;top:249px;width:1px;height:133px;background:#000;"></div>
<div style="left:470px;top:383px;width:1px;height:269px;background:#000;"></div>
<div style="left:541px;top:267px;width:1px;height:353px;background:#000;"></div>
<div style="left:614px;top:249px;width:2px;height:371px;background:#000;"></div>
<div style="left:681px;top:249px;width:1px;height:371px;background:#000;"></div>
<div style="left:682px;top:249px;width:1px;height:371px;background:#fff;"></div>
<div style="left:683px;top:249px;width:1px;height:371px;background:#000;"></div>
<div style="left:682px;top:620px;width:1px;height:32px;background:#000;"></div>
<div style="left:748px;top:267px;width:1px;height:385px;background:#000;"></div>
<div style="left:814px;top:249px;width:1px;height:403px;background:#000;"></div>
<div style="left:815px;top:249px;width:1px;height:403px;background:#fff;"></div>
<div style="left:816px;top:249px;width:1px;height:403px;background:#000;"></div>
<div style="left:889px;top:267px;width:1px;height:385px;background:#000;"></div>
<div style="left:958px;top:267px;width:1px;height:385px;background:#000;"></div>
<div style="left:1002px;top:267px;width:1px;height:385px;background:#000;"></div>
<div style="left:1067px;top:267px;width:1px;height:385px;background:#000;"></div>
<div style="left:1184px;top:267px;width:1px;height:385px;background:#000;"></div>
<div style="left:1260px;top:267px;width:1px;height:385px;background:#000;"></div>
<div style="left:1330px;top:267px;width:1px;height:385px;background:#000;"></div>
<div style="left:1117px;top:249px;width:1px;height:133px;background:#000;"></div>
<div style="left:1118px;top:249px;width:1px;height:133px;background:#fff;"></div>
<div style="left:1119px;top:249px;width:1px;height:133px;background:#000;"></div>
<div style="left:1118px;top:383px;width:1px;height:269px;background:#000;"></div>
<div style="left:1344px;top:228px;width:1px;height:424px;background:#a0a0a0;"></div>
<div style="left:27px;top:249px;width:1px;height:403px;background:#000;"></div>
<div style="left:28px;top:249px;width:1px;height:403px;background:#fff;"></div>
<div style="left:29px;top:249px;width:1px;height:403px;background:#000;"></div>
<div style="left:245px;top:249px;width:1px;height:403px;background:#000;"></div>
<div style="left:246px;top:249px;width:1px;height:403px;background:#fff;"></div>
<div style="left:247px;top:249px;width:1px;height:403px;background:#000;"></div>
<div style="left:27px;top:249px;width:1318px;height:1px;background:#000;"></div>
<div style="left:27px;top:250px;width:1318px;height:1px;background:#fff;"></div>
<div style="left:27px;top:251px;width:1318px;height:1px;background:#000;"></div>
<div style="left:27px;top:381px;width:1318px;height:1px;background:#000;"></div>
<div style="left:27px;top:382px;width:1318px;height:1px;background:#fff;"></div>
<div style="left:27px;top:383px;width:1318px;height:1px;background:#000;"></div>
<div class="t" style="left:31.40px;top:232px;font-size:14px;line-height:18px;color:#000;font-weight:bold;transform:scaleX(1.0056);transform-origin:0 0;">January</div>
<div class="t" style="left:249.00px;top:232px;font-size:14.5px;line-height:18px;color:#111;">My Business</div>
<div class="t" style="left:685.80px;top:232px;font-size:14px;line-height:18px;color:#e8141c;font-weight:bold;transform:scaleX(1.0522);transform-origin:0 0;">CREDIT CARD SAMPLE PAGE</div>
<div class="t" style="left:119.05px;top:251px;font-size:11px;line-height:14px;color:#111;font-weight:bold;transform:scaleX(1.0063);transform-origin:0 0;">Details</div>
<div class="t" style="left:324.85px;top:251px;font-size:11px;line-height:14px;color:#111;font-weight:bold;transform:scaleX(1.0292);transform-origin:0 0;">Other Funds</div>
<div class="t" style="left:522.85px;top:251px;font-size:11px;line-height:14px;color:#111;font-weight:bold;transform:scaleX(1.0568);transform-origin:0 0;">Income</div>
<div class="t" style="left:696.15px;top:251px;font-size:11px;line-height:14px;color:#111;font-weight:bold;transform:scaleX(1.0296);transform-origin:0 0;">Cost of Goods Sold</div>
<div class="t" style="left:939.80px;top:251px;font-size:11px;line-height:14px;color:#111;font-weight:bold;transform:scaleX(1.0435);transform-origin:0 0;">Expenses</div>
<div class="t" style="left:1193.75px;top:251px;font-size:11px;line-height:14px;color:#111;font-weight:bold;transform:scaleX(1.0601);transform-origin:0 0;">Other Funds Paid Out</div>
<div class="t" style="left:36.80px;top:318px;font-size:11px;line-height:14px;color:#111;font-weight:bold;transform:scaleX(1.0400);transform-origin:0 0;">Date</div>
<div class="t" style="left:109.03px;top:318px;font-size:11px;line-height:14px;color:#111;font-weight:bold;transform:scaleX(1.0400);transform-origin:0 0;">Description</div>
<div class="t" style="left:219.28px;top:318px;font-size:11px;line-height:14px;color:#111;font-weight:bold;transform:scaleX(1.0400);transform-origin:0 0;">Ref</div>
<div class="t" style="left:255.98px;top:283px;font-size:11px;line-height:14px;color:#111;font-weight:bold;transform:scaleX(1.0400);transform-origin:0 0;">PAYMENT</div>
<div class="t" style="left:251.54px;top:297px;font-size:11px;line-height:14px;color:#111;font-weight:bold;transform:scaleX(1.0400);transform-origin:0 0;">Funds from</div>
<div class="t" style="left:258.84px;top:311px;font-size:11px;line-height:14px;color:#111;font-weight:bold;transform:scaleX(1.0400);transform-origin:0 0;">Personal</div>
<div class="t" style="left:269.01px;top:325px;font-size:11px;line-height:14px;color:#111;font-weight:bold;transform:scaleX(1.0400);transform-origin:0 0;">Bank</div>
<div class="t" style="left:260.12px;top:339px;font-size:11px;line-height:14px;color:#111;font-weight:bold;transform:scaleX(1.0400);transform-origin:0 0;">Account</div>
<div class="t" style="left:260.12px;top:353px;font-size:11px;line-height:14px;color:#111;font-weight:bold;transform:scaleX(1.0400);transform-origin:0 0;">(Capital)</div>
<div class="t" style="left:330.48px;top:283px;font-size:11px;line-height:14px;color:#111;font-weight:bold;transform:scaleX(1.0400);transform-origin:0 0;">PAYMENT</div>
<div class="t" style="left:326.04px;top:297px;font-size:11px;line-height:14px;color:#111;font-weight:bold;transform:scaleX(1.0400);transform-origin:0 0;">Funds from</div>
<div class="t" style="left:332.07px;top:311px;font-size:11px;line-height:14px;color:#111;font-weight:bold;transform:scaleX(1.0400);transform-origin:0 0;">Business</div>
<div class="t" style="left:343.51px;top:325px;font-size:11px;line-height:14px;color:#111;font-weight:bold;transform:scaleX(1.0400);transform-origin:0 0;">Bank</div>
<div class="t" style="left:334.62px;top:339px;font-size:11px;line-height:14px;color:#111;font-weight:bold;transform:scaleX(1.0400);transform-origin:0 0;">Account</div>
<div class="t" style="left:331.12px;top:353px;font-size:11px;line-height:14px;color:#111;font-weight:bold;transform:scaleX(1.0400);transform-origin:0 0;">(Transfer)</div>
<div class="t" style="left:405.47px;top:297px;font-size:11px;line-height:14px;color:#111;font-weight:bold;transform:scaleX(1.0400);transform-origin:0 0;">Cashback</div>
<div class="t" style="left:405.48px;top:311px;font-size:11px;line-height:14px;color:#111;font-weight:bold;transform:scaleX(1.0400);transform-origin:0 0;">Rewards /</div>
<div class="t" style="left:410.24px;top:325px;font-size:11px;line-height:14px;color:#111;font-weight:bold;transform:scaleX(1.0400);transform-origin:0 0;">Rebates</div>
<div class="t" style="left:407.38px;top:339px;font-size:11px;line-height:14px;color:#111;font-weight:bold;transform:scaleX(1.0400);transform-origin:0 0;">Received</div>
<div class="t" style="left:480.70px;top:318px;font-size:11px;line-height:14px;color:#111;font-weight:bold;transform:scaleX(1.0400);transform-origin:0 0;">Income 1</div>
<div class="t" style="left:553.20px;top:318px;font-size:11px;line-height:14px;color:#111;font-weight:bold;transform:scaleX(1.0400);transform-origin:0 0;">Income 2</div>
<div class="t" style="left:635.26px;top:302px;font-size:11px;line-height:14px;color:#111;font-weight:bold;transform:scaleX(1.0400);transform-origin:0 0;">Total</div>
<div class="t" style="left:623.71px;top:316px;font-size:11px;line-height:14px;color:#111;font-weight:bold;transform:scaleX(1.0400);transform-origin:0 0;">Money In</div>
<div class="t" style="left:693.71px;top:318px;font-size:11px;line-height:14px;color:#111;font-weight:bold;transform:scaleX(1.0400);transform-origin:0 0;">T-Shirts</div>
<div class="t" style="left:767.51px;top:318px;font-size:11px;line-height:14px;color:#111;font-weight:bold;transform:scaleX(1.0400);transform-origin:0 0;">Caps</div>
<div class="t" style="left:820.85px;top:311px;font-size:11px;line-height:14px;color:#111;font-weight:bold;transform:scaleX(1.0400);transform-origin:0 0;">Credit Card</div>
<div class="t" style="left:829.11px;top:325px;font-size:11px;line-height:14px;color:#111;font-weight:bold;transform:scaleX(1.0400);transform-origin:0 0;">Charges</div>
<div class="t" style="left:892.35px;top:311px;font-size:11px;line-height:14px;color:#111;font-weight:bold;transform:scaleX(1.0400);transform-origin:0 0;">Credit Card</div>
<div class="t" style="left:902.84px;top:325px;font-size:11px;line-height:14px;color:#111;font-weight:bold;transform:scaleX(1.0400);transform-origin:0 0;">Interest</div>
<div class="t" style="left:962.52px;top:318px;font-size:11px;line-height:14px;color:#111;font-weight:bold;transform:scaleX(1.0400);transform-origin:0 0;">Phone</div>
<div class="t" style="left:1007.16px;top:318px;font-size:11px;line-height:14px;color:#111;font-weight:bold;transform:scaleX(1.0400);transform-origin:0 0;">Electricity</div>
<div class="t" style="left:1067.71px;top:304px;font-size:11px;line-height:14px;color:#111;font-weight:bold;transform:scaleX(1.0400);transform-origin:0 0;">Account-</div>
<div class="t" style="left:1083.92px;top:318px;font-size:11px;line-height:14px;color:#111;font-weight:bold;transform:scaleX(1.0400);transform-origin:0 0;">ing</div>
<div class="t" style="left:1079.46px;top:332px;font-size:11px;line-height:14px;color:#111;font-weight:bold;transform:scaleX(1.0400);transform-origin:0 0;">Fees</div>
<div class="t" style="left:1135.92px;top:304px;font-size:11px;line-height:14px;color:#111;font-weight:bold;transform:scaleX(1.0400);transform-origin:0 0;">Asset</div>
<div class="t" style="left:1122.56px;top:318px;font-size:11px;line-height:14px;color:#111;font-weight:bold;transform:scaleX(1.0400);transform-origin:0 0;">Purchases</div>
<div class="t" style="left:1121.29px;top:332px;font-size:11px;line-height:14px;color:#111;font-weight:bold;transform:scaleX(1.0400);transform-origin:0 0;">(over $500)</div>
<div class="t" style="left:1208.84px;top:311px;font-size:11px;line-height:14px;color:#111;font-weight:bold;transform:scaleX(1.0400);transform-origin:0 0;">Loan</div>
<div class="t" style="left:1188.48px;top:325px;font-size:11px;line-height:14px;color:#111;font-weight:bold;transform:scaleX(1.0400);transform-origin:0 0;">Repayments</div>
<div class="t" style="left:1265.44px;top:297px;font-size:11px;line-height:14px;color:#111;font-weight:bold;transform:scaleX(1.0400);transform-origin:0 0;">Transfer to</div>
<div class="t" style="left:1269.57px;top:311px;font-size:11px;line-height:14px;color:#111;font-weight:bold;transform:scaleX(1.0400);transform-origin:0 0;">Business</div>
<div class="t" style="left:1281.01px;top:325px;font-size:11px;line-height:14px;color:#111;font-weight:bold;transform:scaleX(1.0400);transform-origin:0 0;">Bank</div>
<div class="t" style="left:1272.12px;top:339px;font-size:11px;line-height:14px;color:#111;font-weight:bold;transform:scaleX(1.0400);transform-origin:0 0;">Account</div>
<div style="left:1331px;top:300px;width:13px;height:40px;overflow:hidden"><div class="t" style="left:3px;top:17.7px;font-size:11px;line-height:14px;font-weight:bold;color:#111">Drawings</div></div>
<div class="t" style="left:36.40px;top:386px;font-size:11px;line-height:14px;color:#000;transform:scaleX(0.9425);transform-origin:0 0;">Jan-01</div>
<div class="t" style="left:34.60px;top:403px;font-size:11px;line-height:14px;color:#000;transform:scaleX(0.9960);transform-origin:0 0;">Jan-05</div>
<div class="t" style="left:73.60px;top:403px;font-size:11px;line-height:14px;color:#000;transform:scaleX(0.9579);transform-origin:0 0;">Purchase Stock</div>
<div class="t" style="left:238.13px;top:403px;font-size:11px;line-height:14px;color:#000;transform:scaleX(0.9600);transform-origin:0 0;">1</div>
<div class="t" style="left:34.60px;top:420px;font-size:11px;line-height:14px;color:#000;transform:scaleX(0.9960);transform-origin:0 0;">Jan-08</div>
<div class="t" style="left:73.60px;top:420px;font-size:11px;line-height:14px;color:#000;transform:scaleX(0.9562);transform-origin:0 0;">Phone charge</div>
<div class="t" style="left:238.13px;top:420px;font-size:11px;line-height:14px;color:#000;transform:scaleX(0.9600);transform-origin:0 0;">2</div>
<div class="t" style="left:39.10px;top:437px;font-size:11px;line-height:14px;color:#000;transform:scaleX(0.8836);transform-origin:0 0;">Jan-11</div>
<div class="t" style="left:73.60px;top:437px;font-size:11px;line-height:14px;color:#000;transform:scaleX(0.9222);transform-origin:0 0;">Electricity</div>
<div class="t" style="left:238.13px;top:437px;font-size:11px;line-height:14px;color:#000;transform:scaleX(0.9600);transform-origin:0 0;">3</div>
<div class="t" style="left:36.40px;top:454px;font-size:11px;line-height:14px;color:#000;transform:scaleX(0.9425);transform-origin:0 0;">Jan-15</div>
<div class="t" style="left:73.60px;top:454px;font-size:11px;line-height:14px;color:#000;transform:scaleX(0.9171);transform-origin:0 0;">Transfer from Business Bank</div>
<div class="t" style="left:238.13px;top:454px;font-size:11px;line-height:14px;color:#000;transform:scaleX(0.9600);transform-origin:0 0;">4</div>
<div class="t" style="left:34.60px;top:471px;font-size:11px;line-height:14px;color:#000;transform:scaleX(0.9960);transform-origin:0 0;">Jan-20</div>
<div class="t" style="left:73.60px;top:471px;font-size:11px;line-height:14px;color:#000;transform:scaleX(0.9050);transform-origin:0 0;">Cash paid in by owner</div>
<div class="t" style="left:238.13px;top:471px;font-size:11px;line-height:14px;color:#000;transform:scaleX(0.9600);transform-origin:0 0;">5</div>
<div class="t" style="left:36.40px;top:488px;font-size:11px;line-height:14px;color:#000;transform:scaleX(0.9425);transform-origin:0 0;">Jan-21</div>
<div class="t" style="left:73.60px;top:488px;font-size:11px;line-height:14px;color:#000;transform:scaleX(0.8880);transform-origin:0 0;">CC Interest</div>
<div class="t" style="left:238.13px;top:488px;font-size:11px;line-height:14px;color:#000;transform:scaleX(0.9600);transform-origin:0 0;">6</div>
<div class="t" style="left:36.40px;top:505px;font-size:11px;line-height:14px;color:#000;transform:scaleX(0.9425);transform-origin:0 0;">Jan-21</div>
<div class="t" style="left:73.60px;top:505px;font-size:11px;line-height:14px;color:#000;transform:scaleX(0.9238);transform-origin:0 0;">Transfer to Business Bank</div>
<div class="t" style="left:238.13px;top:505px;font-size:11px;line-height:14px;color:#000;transform:scaleX(0.9600);transform-origin:0 0;">7</div>
<div class="t" style="left:34.60px;top:522px;font-size:11px;line-height:14px;color:#000;transform:scaleX(0.9960);transform-origin:0 0;">Jan-22</div>
<div class="t" style="left:73.60px;top:522px;font-size:11px;line-height:14px;color:#000;transform:scaleX(0.9580);transform-origin:0 0;">Accounting Fees</div>
<div class="t" style="left:34.60px;top:539px;font-size:11px;line-height:14px;color:#000;transform:scaleX(0.9960);transform-origin:0 0;">Jan-28</div>
<div class="t" style="left:73.60px;top:539px;font-size:11px;line-height:14px;color:#000;transform:scaleX(0.9268);transform-origin:0 0;">Cashback Rewards</div>
<div class="t" style="left:238.13px;top:539px;font-size:11px;line-height:14px;color:#000;transform:scaleX(0.9600);transform-origin:0 0;">8</div>
<div class="t" style="left:36.40px;top:556px;font-size:11px;line-height:14px;color:#000;transform:scaleX(0.9425);transform-origin:0 0;">Jan-31</div>
<div class="t" style="left:73.60px;top:556px;font-size:11px;line-height:14px;color:#000;transform:scaleX(0.8991);transform-origin:0 0;">Credit Card Interest</div>
<div class="t" style="left:238.13px;top:556px;font-size:11px;line-height:14px;color:#000;transform:scaleX(0.9600);transform-origin:0 0;">9</div>
<div class="t" style="left:36.40px;top:573px;font-size:11px;line-height:14px;color:#000;transform:scaleX(0.9425);transform-origin:0 0;">Jan-31</div>
<div class="t" style="left:73.60px;top:573px;font-size:11px;line-height:14px;color:#000;transform:scaleX(0.9260);transform-origin:0 0;">Loan and Interest Repaid</div>
<div class="t" style="left:232.25px;top:573px;font-size:11px;line-height:14px;color:#000;transform:scaleX(0.9600);transform-origin:0 0;">10</div>
<div class="t" style="left:36.40px;top:590px;font-size:11px;line-height:14px;color:#000;transform:scaleX(0.9425);transform-origin:0 0;">Jan-31</div>
<div class="t" style="left:73.60px;top:590px;font-size:11px;line-height:14px;color:#000;transform:scaleX(0.9155);transform-origin:0 0;">Cash taken by owner</div>
<div class="t" style="left:233.04px;top:590px;font-size:11px;line-height:14px;color:#000;transform:scaleX(0.9600);transform-origin:0 0;">11</div>
<div class="t" style="left:36.40px;top:607px;font-size:11px;line-height:14px;color:#000;transform:scaleX(0.9425);transform-origin:0 0;">Jan-31</div>
<div class="t" style="left:73.60px;top:607px;font-size:11px;line-height:14px;color:#000;transform:scaleX(0.9660);transform-origin:0 0;">Laptop</div>
<div class="t" style="left:232.25px;top:607px;font-size:11px;line-height:14px;color:#000;transform:scaleX(0.9600);transform-origin:0 0;">12</div>
<div class="t" style="left:83.70px;top:386px;font-size:11px;line-height:14px;color:#000;font-weight:bold;transform:scaleX(1.0595);transform-origin:0 0;">Opening Balance</div>
<div class="t" style="left:711.94px;top:403px;font-size:11px;line-height:14px;color:#000;transform:scaleX(0.9500);transform-origin:0 0;">500.00</div>
<div class="t" style="left:778.94px;top:403px;font-size:11px;line-height:14px;color:#000;transform:scaleX(0.9500);transform-origin:0 0;">400.00</div>
<div class="t" style="left:971.65px;top:420px;font-size:11px;line-height:14px;color:#000;transform:scaleX(0.9500);transform-origin:0 0;">45.00</div>
<div class="t" style="left:1036.65px;top:437px;font-size:11px;line-height:14px;color:#000;transform:scaleX(0.9500);transform-origin:0 0;">95.00</div>
<div class="t" style="left:359.04px;top:454px;font-size:11px;line-height:14px;color:#000;transform:scaleX(0.9500);transform-origin:0 0;">250.00</div>
<div class="t" style="left:275.72px;top:471px;font-size:11px;line-height:14px;color:#000;transform:scaleX(0.9500);transform-origin:0 0;">1,000.00</div>
<div class="t" style="left:927.25px;top:488px;font-size:11px;line-height:14px;color:#000;transform:scaleX(0.9500);transform-origin:0 0;">25.00</div>
<div class="t" style="left:1294.04px;top:505px;font-size:11px;line-height:14px;color:#000;transform:scaleX(0.9500);transform-origin:0 0;">200.00</div>
<div class="t" style="left:1082.04px;top:522px;font-size:11px;line-height:14px;color:#000;transform:scaleX(0.9500);transform-origin:0 0;">180.00</div>
<div class="t" style="left:440.05px;top:539px;font-size:11px;line-height:14px;color:#000;transform:scaleX(0.9500);transform-origin:0 0;">45.00</div>
<div class="t" style="left:859.25px;top:556px;font-size:11px;line-height:14px;color:#000;transform:scaleX(0.9500);transform-origin:0 0;">25.00</div>
<div class="t" style="left:1088.45px;top:573px;font-size:11px;line-height:14px;color:#000;transform:scaleX(0.9500);transform-origin:0 0;">80.00</div>
<div class="t" style="left:1224.74px;top:573px;font-size:11px;line-height:14px;color:#000;transform:scaleX(0.9500);transform-origin:0 0;">400.00</div>
<div class="t" style="left:1149.04px;top:607px;font-size:11px;line-height:14px;color:#000;transform:scaleX(0.9500);transform-origin:0 0;">800.00</div>
<div class="t" style="left:638.04px;top:454px;font-size:11px;line-height:14px;color:#000;font-weight:bold;transform:scaleX(1.1400);transform-origin:0 0;">250.00</div>
<div class="t" style="left:627.59px;top:471px;font-size:11px;line-height:14px;color:#000;font-weight:bold;transform:scaleX(1.1400);transform-origin:0 0;">1,000.00</div>
<div class="t" style="left:645.02px;top:539px;font-size:11px;line-height:14px;color:#000;font-weight:bold;transform:scaleX(1.1400);transform-origin:0 0;">45.00</div>
<svg style="position:absolute;left:0;top:0" width="1346" height="702"><text transform="translate(85.75,667.2) rotate(-15)" font-family="Liberation Sans" font-weight="bold" font-size="12.5" letter-spacing="3" fill="#d0101e" stroke="#d0101e" stroke-width="0.35">SAMPLE PAGE</text></svg>
<svg style="position:absolute;left:0;top:0" width="1346" height="702"><text transform="translate(524.25,667.2) rotate(-15)" font-family="Liberation Sans" font-weight="bold" font-size="12.5" letter-spacing="3" fill="#d0101e" stroke="#d0101e" stroke-width="0.35">SAMPLE PAGE</text></svg>
<div style="left:27px;top:226px;width:45px;height:26px;box-sizing:border-box;border:2px solid #217346"></div>
<div style="left:68px;top:248px;width:5px;height:5px;background:#217346;"></div>
<div style="left:69px;top:249px;width:3px;height:3px;background:#217346;outline:1px solid #fff;"></div>
<div style="left:0px;top:652px;width:1346px;height:28px;background:#e6e6e6;"></div>
<div style="left:0px;top:652px;width:1346px;height:1px;background:#a6a6a6;"></div>
<div style="left:0px;top:680px;width:1346px;height:1px;background:#bdbdbd;"></div>
<svg style="position:absolute;left:26px;top:660px;" width="5" height="9" viewBox="0 0 5 9"><path d="M5 0V9L0 4.5Z" fill="#c3c3c3"/></svg>
<svg style="position:absolute;left:55px;top:660px;" width="5" height="9" viewBox="0 0 5 9"><path d="M0 0V9L5 4.5Z" fill="#c3c3c3"/></svg>
<div style="left:100px;top:652px;width:103px;height:25px;background:linear-gradient(#ffffff 15%,#aadcf0);"></div>
<div style="left:100px;top:652px;width:1px;height:25px;background:#8a8a8a;"></div>
<div style="left:202px;top:652px;width:1px;height:25px;background:#8a8a8a;"></div>
<div style="left:100px;top:675px;width:103px;height:2px;background:#217346;"></div>
<div class="t" style="left:112.40px;top:658px;font-size:13px;line-height:16px;color:#217346;font-weight:bold;transform:scaleX(0.9737);transform-origin:0 0;">Sample Page</div>
<div style="left:205px;top:654px;width:67px;height:23px;background:#ffff00;"></div>
<div style="left:273px;top:654px;width:1px;height:22px;background:#b4b4b4;"></div>
<div class="t" style="left:216.70px;top:659px;font-size:12px;line-height:15px;color:#222;transform:scaleX(1.0883);transform-origin:0 0;">Control</div>
<div style="left:274px;top:654px;width:42px;height:23px;background:#ccccff;"></div>
<div style="left:317px;top:654px;width:1px;height:22px;background:#b4b4b4;"></div>
<div class="t" style="left:286.00px;top:659px;font-size:12px;line-height:15px;color:#222;transform:scaleX(0.9458);transform-origin:0 0;">Jan</div>
<div style="left:320px;top:654px;width:44px;height:23px;background:#ccffff;"></div>
<div style="left:365px;top:654px;width:1px;height:22px;background:#b4b4b4;"></div>
<div class="t" style="left:330.00px;top:659px;font-size:12px;line-height:15px;color:#222;">Feb</div>
<div style="left:366px;top:654px;width:44px;height:23px;background:#ccccff;"></div>
<div style="left:411px;top:654px;width:1px;height:22px;background:#b4b4b4;"></div>
<div class="t" style="left:376.40px;top:659px;font-size:12px;line-height:15px;color:#222;transform:scaleX(1.1129);transform-origin:0 0;">Mar</div>
<div style="left:414px;top:654px;width:50px;height:23px;background:#ccffff;"></div>
<div style="left:465px;top:654px;width:1px;height:22px;background:#b4b4b4;"></div>
<div class="t" style="left:424.70px;top:659px;font-size:12px;line-height:15px;color:#222;transform:scaleX(1.2288);transform-origin:0 0;">April</div>
<div style="left:469px;top:654px;width:45px;height:23px;background:#ccccff;"></div>
<div style="left:515px;top:654px;width:1px;height:22px;background:#b4b4b4;"></div>
<div class="t" style="left:478.00px;top:659px;font-size:12px;line-height:15px;color:#222;transform:scaleX(1.0586);transform-origin:0 0;">May</div>
<div style="left:518px;top:654px;width:44px;height:23px;background:#ccffff;"></div>
<div style="left:563px;top:654px;width:1px;height:22px;background:#b4b4b4;"></div>
<div class="t" style="left:529.00px;top:659px;font-size:12px;line-height:15px;color:#222;transform:scaleX(1.0078);transform-origin:0 0;">Jun</div>
<div style="left:566px;top:654px;width:44px;height:23px;background:#ccccff;"></div>
<div style="left:611px;top:654px;width:1px;height:22px;background:#b4b4b4;"></div>
<div class="t" style="left:576.30px;top:659px;font-size:12px;line-height:15px;color:#222;transform:scaleX(1.0778);transform-origin:0 0;">July</div>
<div style="left:614px;top:654px;width:45px;height:23px;background:#ccffff;"></div>
<div style="left:660px;top:654px;width:1px;height:22px;background:#b4b4b4;"></div>
<div class="t" style="left:624.40px;top:659px;font-size:12px;line-height:15px;color:#222;transform:scaleX(1.0303);transform-origin:0 0;">Aug</div>
<div style="left:663px;top:654px;width:42px;height:23px;background:#ccccff;"></div>
<div style="left:706px;top:654px;width:1px;height:22px;background:#b4b4b4;"></div>
<div class="t" style="left:673.00px;top:659px;font-size:12px;line-height:15px;color:#222;transform:scaleX(0.9601);transform-origin:0 0;">Sep</div>
<div style="left:706px;top:654px;width:43px;height:23px;background:#ccffff;"></div>
<div style="left:750px;top:654px;width:1px;height:22px;background:#b4b4b4;"></div>
<div class="t" style="left:718.00px;top:659px;font-size:12px;line-height:15px;color:#222;transform:scaleX(1.0446);transform-origin:0 0;">Oct</div>
<div style="left:753px;top:654px;width:46px;height:23px;background:#ccccff;"></div>
<div style="left:800px;top:654px;width:1px;height:22px;background:#b4b4b4;"></div>
<div class="t" style="left:763.00px;top:659px;font-size:12px;line-height:15px;color:#222;transform:scaleX(1.0543);transform-origin:0 0;">Nov</div>
<div style="left:802px;top:654px;width:44px;height:23px;background:#ccffff;"></div>
<div style="left:847px;top:654px;width:1px;height:22px;background:#b4b4b4;"></div>
<div class="t" style="left:812.40px;top:659px;font-size:12px;line-height:15px;color:#222;transform:scaleX(1.0075);transform-origin:0 0;">Dec</div>
<div style="left:850px;top:654px;width:45px;height:23px;background:#7030a0;"></div>
<div style="left:896px;top:654px;width:1px;height:22px;background:#b4b4b4;"></div>
<div class="t" style="left:860.00px;top:659px;font-size:12px;line-height:15px;color:#fff;transform:scaleX(1.0581);transform-origin:0 0;">P&amp;L</div>
<div style="left:900px;top:654px;width:103px;height:23px;background:#ff0000;"></div>
<div style="left:1004px;top:654px;width:1px;height:22px;background:#b4b4b4;"></div>
<div class="t" style="left:911.00px;top:659px;font-size:12px;line-height:15px;color:#fff;transform:scaleX(0.9672);transform-origin:0 0;">Balance Sheet</div>
<svg style="position:absolute;left:1038px;top:657px;" width="18" height="18" viewBox="0 0 18 18"><circle cx="9" cy="9" r="7.8" fill="none" stroke="#777" stroke-width="1.3"/><path d="M9 4.5V13.5M4.5 9H13.5" stroke="#777" stroke-width="1.6"/></svg>
<div style="left:1202px;top:661px;width:2px;height:2px;background:#9a9a9a;"></div>
<div style="left:1202px;top:666px;width:2px;height:2px;background:#9a9a9a;"></div>
<div style="left:1202px;top:671px;width:2px;height:2px;background:#9a9a9a;"></div>
<div style="left:1219px;top:659px;width:15px;height:14px;background:#fff;box-sizing:border-box;border:1px solid #c6c6c6;"></div>
<svg style="position:absolute;left:1224px;top:662px;" width="5" height="8" viewBox="0 0 5 8"><path d="M5 0V8L0 4Z" fill="#555"/></svg>
<div style="left:1234px;top:659px;width:76px;height:14px;background:#fff;box-sizing:border-box;border:1px solid #c6c6c6;"></div>
<div style="left:1310px;top:659px;width:18px;height:14px;background:#dcdcdc;"></div>
<div style="left:1328px;top:659px;width:15px;height:14px;background:#fff;box-sizing:border-box;border:1px solid #c6c6c6;"></div>
<svg style="position:absolute;left:1333px;top:662px;" width="5" height="8" viewBox="0 0 5 8"><path d="M0 0V8L5 4Z" fill="#555"/></svg>
<div style="left:0px;top:681px;width:1346px;height:21px;background:#f1f1f1;"></div>
<div class="t" style="left:7.60px;top:684px;font-size:12px;line-height:15px;color:#555;transform:scaleX(0.8735);transform-origin:0 0;">Ready</div>
<svg style="position:absolute;left:58px;top:684px;" width="14" height="14" viewBox="0 0 14 14"><circle cx="3.4" cy="3.4" r="3" fill="#555"/><path d="M1.5 6.5V12.5H12.5V1.5H7" fill="none" stroke="#555"/><rect x="6.5" y="1" width="6" height="2" fill="#555"/><path d="M3 5.5H5M6.5 5.5H8.5M10 5.5H12M3 7.5H5M6.5 7.5H8.5M10 7.5H12M3 9.5H5M6.5 9.5H8.5M10 9.5H12" stroke="#666"/></svg>
<div style="left:1074px;top:681px;width:38px;height:21px;background:#c8c8c8;"></div>
<svg style="position:absolute;left:1085px;top:683px;" width="15" height="15" viewBox="0 0 15 15"><rect x="0.5" y="0.5" width="14" height="14" fill="none" stroke="#666"/><path d="M5.5 0V15" stroke="#666"/><path d="M9.5 0V15" stroke="#666"/><path d="M0 5.5H15" stroke="#666"/><path d="M0 9.5H15" stroke="#666"/></svg>
<svg style="position:absolute;left:1124px;top:684px;" width="15" height="14" viewBox="0 0 15 14"><rect x="0.5" y="0.5" width="14" height="13" fill="none" stroke="#666"/><rect x="3.5" y="3.5" width="8" height="7" fill="none" stroke="#666"/><path d="M5 5.5H10M5 7.5H10M5 9H10" stroke="#666"/></svg>
<svg style="position:absolute;left:1162px;top:683px;" width="15" height="15" viewBox="0 0 15 15"><rect x="0.5" y="0.5" width="14" height="14" fill="none" stroke="#666"/><path d="M0.5 8.5H9.5V0.5M5.5 0.5V8.5" fill="none" stroke="#666"/></svg>
<div style="left:1193px;top:690px;width:6px;height:2px;background:#555;"></div>
<div style="left:1203px;top:690px;width:100px;height:1px;background:#9a9a9a;"></div>
<div style="left:1240px;top:685px;width:4px;height:11px;background:#666;"></div>
<div style="left:1253px;top:687px;width:1px;height:6px;background:#9a9a9a;"></div>
<svg style="position:absolute;left:1306px;top:685px;" width="11" height="11" viewBox="0 0 11 11"><path d="M5.5 0V11M0 5.5H11" stroke="#555" stroke-width="2"/></svg>
<div class="t" style="left:1331.00px;top:684px;font-size:12px;line-height:15px;color:#555;">80%</div>
</div></body></html>
